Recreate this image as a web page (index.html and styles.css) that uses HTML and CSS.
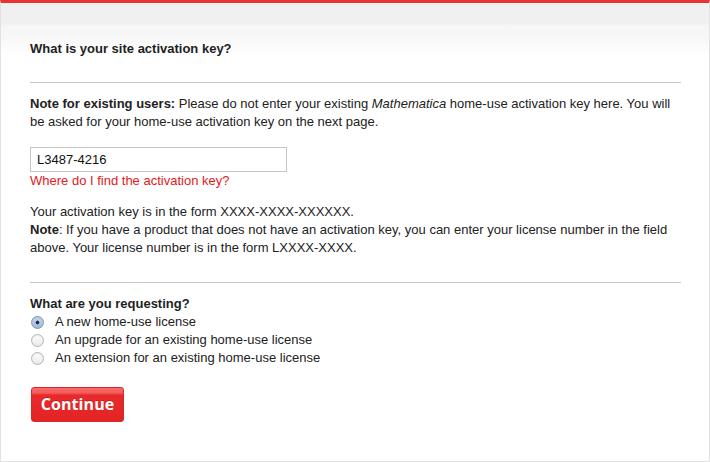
FILE: index.html
```html
<!DOCTYPE html>
<html lang="en">
<head>
<meta charset="utf-8">
<title>Site activation key</title>
<link rel="stylesheet" href="styles.css">
</head>
<body>
<div class="page">
  <form class="activation">
    <h2 class="section-title">What is your site activation key?</h2>
    <hr class="rule rule-first">
    <p class="note"><strong>Note for existing users:</strong> Please do not enter your existing <em>Mathematica</em> home-use activation key here. You will be asked for your home-use activation key on the next page.</p>
    <input class="key-field" type="text" value="L3487-4216">
    <a class="help-link" href="#">Where do I find the activation key?</a>
    <p class="hint">Your activation key is in the form XXXX-XXXX-XXXXXX.<br><strong>Note</strong>: If you have a product that does not have an activation key, you can enter your license number in the field above. Your license number is in the form LXXXX-XXXX.</p>
    <hr class="rule">
    <h3 class="question">What are you requesting?</h3>
    <div class="options">
      <label class="option"><input type="radio" name="req" checked><span>A new home-use license</span></label>
      <label class="option"><input type="radio" name="req"><span>An upgrade for an existing home-use license</span></label>
      <label class="option"><input type="radio" name="req"><span>An extension for an existing home-use license</span></label>
    </div>
    <button class="continue" type="button">Continue</button>
  </form>
</div>
</body>
</html>
```

FILE: styles.css
```css
html, body {
  margin: 0;
  padding: 0;
  background: #fff;
}

.page {
  box-sizing: border-box;
  width: 710px;
  height: 462px;
  border-top: 3px solid #e93333;
  border-left: 1px solid #e2e2e2;
  border-right: 1px solid #e2e2e2;
  border-bottom: 1px solid #e2e2e2;
  background: linear-gradient(#f0f0f0 0, #f0f0f0 21px, #f6f6f6 22px, #f7f7f7 34px, #fcfcfc 46px, #fff 54px);
  padding: 37px 28px 0 29px;
  font-family: "Liberation Sans", Arial, sans-serif;
  font-size: 13px;
  line-height: 18px;
  color: #222;
}

.activation {
  display: flex;
  flex-direction: column;
  align-items: flex-start;
}

.section-title,
.question {
  margin: 0;
  font-size: 13px;
  line-height: 18px;
  font-weight: bold;
  color: #1e1e24;
}

.rule {
  align-self: stretch;
  margin: 25px 0 12px;
  border: 0;
  height: 1px;
  background: #c9c9c9;
}

.rule-first {
  margin-top: 24px;
}

.note,
.hint {
  margin: 0;
}

.key-field {
  box-sizing: border-box;
  width: 257px;
  height: 25px;
  margin-top: 16px;
  padding: 0 6px;
  border: 1px solid #c4c4c4;
  font-family: "Liberation Sans", Arial, sans-serif;
  font-size: 13px;
  color: #111;
  outline: none;
}

.help-link {
  color: #e3191b;
  text-decoration: none;
}

.hint {
  margin-top: 13px;
}

.options {
  display: flex;
  flex-direction: column;
}

.option {
  display: flex;
  align-items: center;
  height: 18px;
}

.option input {
  appearance: none;
  -webkit-appearance: none;
  box-sizing: border-box;
  width: 13px;
  height: 13px;
  margin: 0 11px 0 1px;
  border-radius: 50%;
  border: 1px solid #b4b4b4;
  background: linear-gradient(#fdfdfd, #e9e9e9);
  box-shadow: inset 0 1px 1px rgba(0, 0, 0, 0.08);
}

.option input:checked {
  border-color: #8096b4;
  background: radial-gradient(circle at 50% 50%, #2a2f3a 0, #2a2f3a 1.6px, transparent 2.2px),
              linear-gradient(#c5d8ee, #9db8da);
}

.continue {
  box-sizing: border-box;
  margin-top: 20px;
  margin-left: 1px;
  width: 93px;
  height: 35px;
  padding: 0 0 2px;
  border: 1px solid #d22a2a;
  border-radius: 3px;
  background: linear-gradient(#fb6b6b 0, #f35b5b 5px, #e82a2a 7px, #e42424 100%);
  color: #fff;
  font-family: "Open Sans", "DejaVu Sans", sans-serif;
  font-weight: 700;
  font-size: 16px;
  letter-spacing: 0.1px;
  text-shadow: 0 -1px 0 rgba(150, 0, 0, 0.35);
  cursor: pointer;
}
```
